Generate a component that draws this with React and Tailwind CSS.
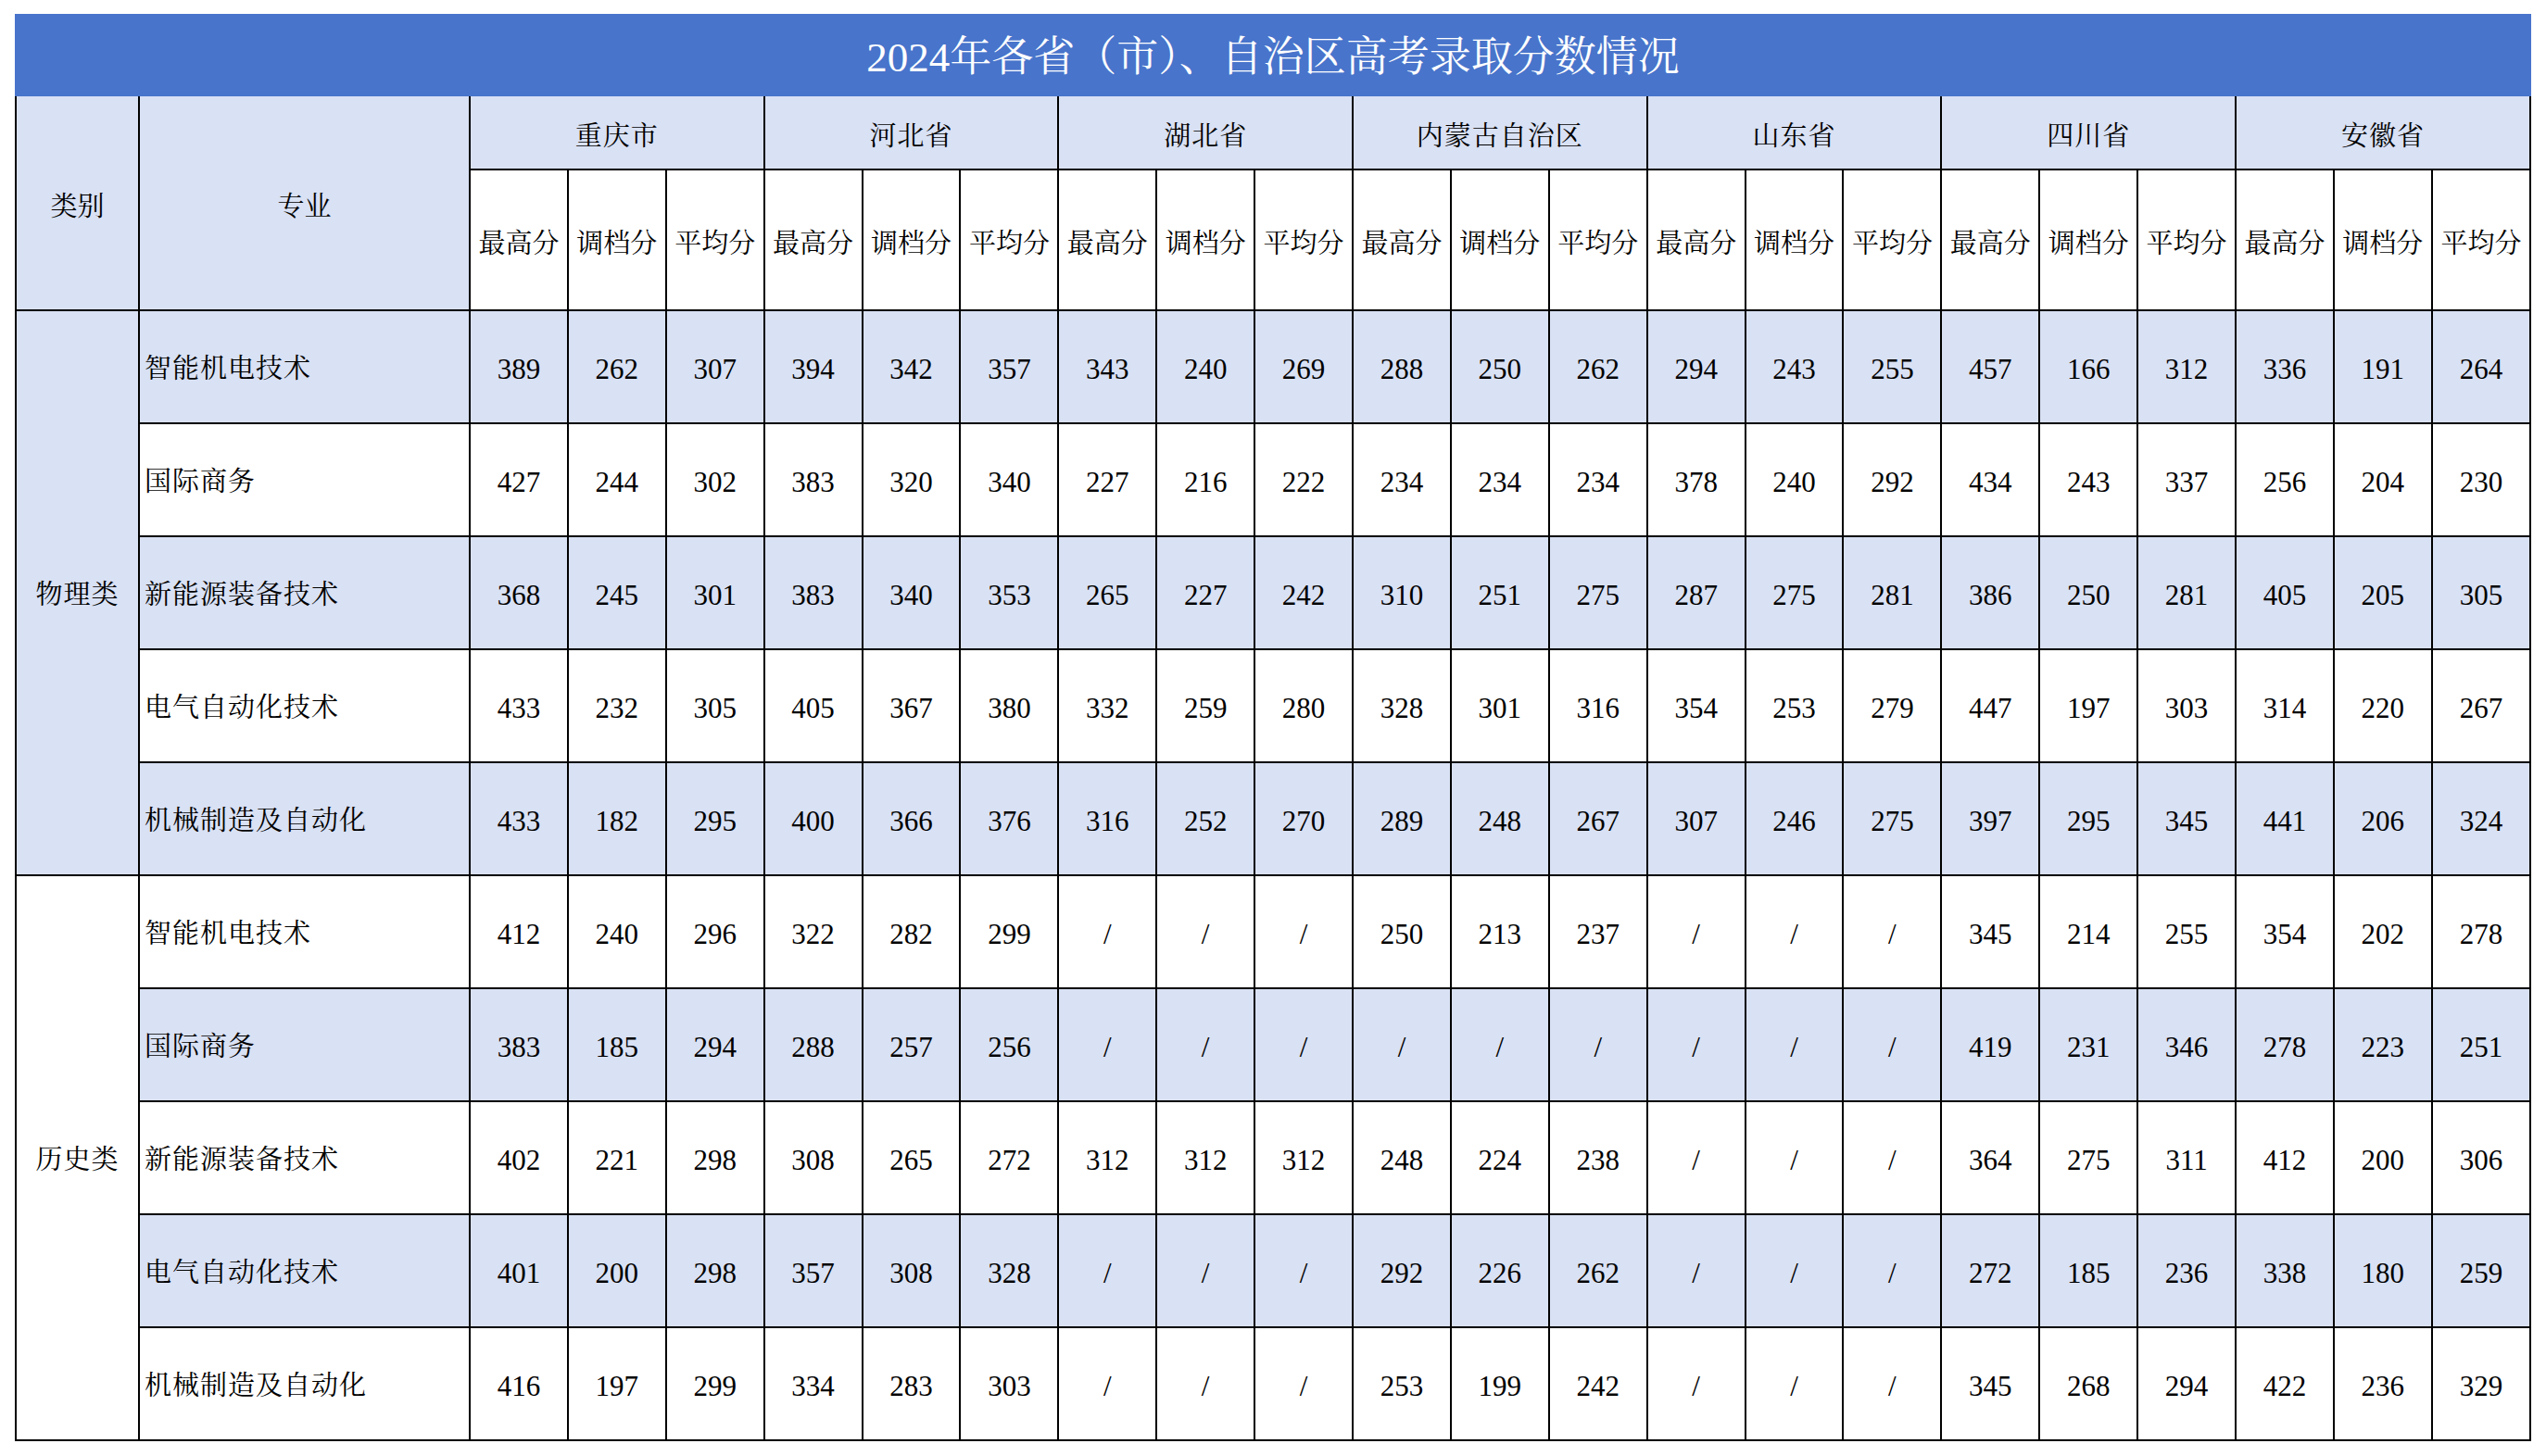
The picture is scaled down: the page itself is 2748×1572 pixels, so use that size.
const provinces = ['重庆市', '河北省', '湖北省', '内蒙古自治区', '山东省', '四川省', '安徽省'];
const subHeads = ['最高分', '调档分', '平均分'];

const groups = [
  {
    name: '物理类',
    rows: [
      ['智能机电技术', '389 262 307 394 342 357 343 240 269 288 250 262 294 243 255 457 166 312 336 191 264'],
      ['国际商务', '427 244 302 383 320 340 227 216 222 234 234 234 378 240 292 434 243 337 256 204 230'],
      ['新能源装备技术', '368 245 301 383 340 353 265 227 242 310 251 275 287 275 281 386 250 281 405 205 305'],
      ['电气自动化技术', '433 232 305 405 367 380 332 259 280 328 301 316 354 253 279 447 197 303 314 220 267'],
      ['机械制造及自动化', '433 182 295 400 366 376 316 252 270 289 248 267 307 246 275 397 295 345 441 206 324'],
    ],
  },
  {
    name: '历史类',
    rows: [
      ['智能机电技术', '412 240 296 322 282 299 / / / 250 213 237 / / / 345 214 255 354 202 278'],
      ['国际商务', '383 185 294 288 257 256 / / / / / / / / / 419 231 346 278 223 251'],
      ['新能源装备技术', '402 221 298 308 265 272 312 312 312 248 224 238 / / / 364 275 311 412 200 306'],
      ['电气自动化技术', '401 200 298 357 308 328 / / / 292 226 262 / / / 272 185 236 338 180 259'],
      ['机械制造及自动化', '416 197 299 334 283 303 / / / 253 199 242 / / / 345 268 294 422 236 329'],
    ],
  },
];

const cell = 'border-2 border-black text-center align-middle pt-[6px] pb-0';
const head = 'border-2 border-black text-center align-middle pt-[10px] pb-0 font-normal';

export default function App() {
  let rowIndex = 0;
  return (
    <div className="min-h-screen bg-white pt-[15px] pl-[16px] font-['Liberation_Serif','Noto_Serif_CJK_SC','Noto_Sans_CJK_SC',serif] text-[29px] text-black">
      <div className="w-[2716px]">
        {/* 标题 */}
        <div className="h-[89px] pt-[6px] bg-[#4874cb] flex items-center justify-center text-white text-[45px]">
          2024年各省（市）、自治区高考录取分数情况
        </div>

        <table className="w-[2716px] table-fixed border-collapse">
          <colgroup>
            <col className="w-[133px]" />
            <col className="w-[357px]" />
            {Array.from({ length: 21 }).map((_, i) => (
              <col key={i} />
            ))}
          </colgroup>
          <thead>
            <tr className="h-[79px] bg-[#d9e1f4]">
              <th rowSpan={2} className={`${head} border-t-0`}>类别</th>
              <th rowSpan={2} className={`${head} border-t-0`}>专业</th>
              {provinces.map((p) => (
                <th key={p} colSpan={3} className={`${head} border-t-0 tracking-[1px]`}>
                  {p}
                </th>
              ))}
            </tr>
            <tr className="h-[152px] bg-white">
              {provinces.map((p) =>
                subHeads.map((s) => (
                  <th key={p + s} className={`${head} px-0 whitespace-nowrap`}>
                    {s}
                  </th>
                ))
              )}
            </tr>
          </thead>
          <tbody>
            {groups.map((g) =>
              g.rows.map(([major, nums], i) => {
                const even = rowIndex++ % 2 === 0;
                return (
                  <tr key={g.name + i} className={`h-[122px] ${even ? 'bg-[#d9e1f4]' : 'bg-white'}`}>
                    {i === 0 && (
                      <td
                        rowSpan={g.rows.length}
                        className={`${cell} tracking-[1px] ${g.name === '物理类' ? 'bg-[#d9e1f4]' : 'bg-white'}`}
                      >
                        {g.name}
                      </td>
                    )}
                    <td className="border-2 border-black align-middle text-left pl-[5px] pt-[6px] whitespace-nowrap tracking-[1px]">
                      {major}
                    </td>
                    {nums.split(' ').map((n, j) => (
                      <td key={j} className={`${cell} text-[31px]`}>
                        {n}
                      </td>
                    ))}
                  </tr>
                );
              })
            )}
          </tbody>
        </table>
      </div>
    </div>
  );
}
